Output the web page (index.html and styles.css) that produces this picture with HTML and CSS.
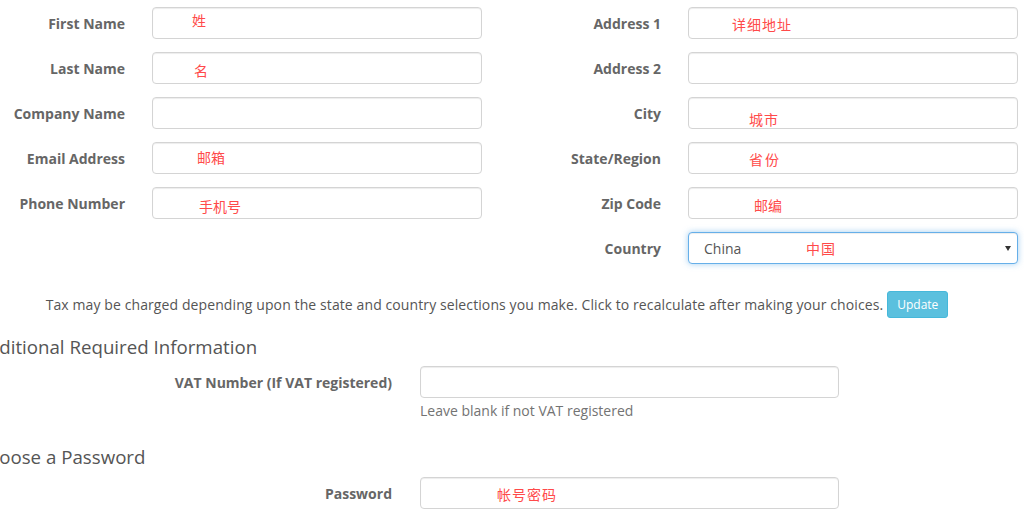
FILE: index.html
```html
<!DOCTYPE html>
<html>
<head>
    <meta charset="utf-8">
    <title>Register</title>
    <link rel="stylesheet" href="styles.css">
</head>
<body>
    <div class="page">

        <div class="columns">
            <div class="col col-left">
                <label>First Name</label>
                <div class="field"><input class="form-control" type="text"><span class="note n-first">姓</span></div>

                <label>Last Name</label>
                <div class="field"><input class="form-control" type="text"><span class="note n-last">名</span></div>

                <label>Company Name</label>
                <div class="field"><input class="form-control" type="text"></div>

                <label>Email Address</label>
                <div class="field"><input class="form-control" type="text"><span class="note n-email">邮箱</span></div>

                <label>Phone Number</label>
                <div class="field"><input class="form-control" type="text"><span class="note n-phone">手机号</span></div>
            </div>

            <div class="col col-right">
                <label>Address 1</label>
                <div class="field"><input class="form-control" type="text"><span class="note n-addr">详细地址</span></div>

                <label>Address 2</label>
                <div class="field"><input class="form-control" type="text"></div>

                <label>City</label>
                <div class="field"><input class="form-control" type="text"><span class="note n-city">城市</span></div>

                <label>State/Region</label>
                <div class="field"><input class="form-control" type="text"><span class="note n-state">省份</span></div>

                <label>Zip Code</label>
                <div class="field"><input class="form-control" type="text"><span class="note n-zip">邮编</span></div>

                <label>Country</label>
                <div class="field select-wrap">
                    <select class="form-control focused">
                        <option>China</option>
                    </select>
                    <span class="note n-country">中国</span>
                </div>
            </div>
        </div>

        <div class="tax">
            <span>Tax may be charged depending upon the state and country selections you make. Click to recalculate after making your choices.</span>
            <button class="btn-update">Update</button>
        </div>

        <h3 class="section-title">Additional Required Information</h3>
        <div class="wide-row">
            <label>VAT Number (If VAT registered)</label>
            <div class="field"><input class="form-control" type="text"></div>
            <div></div>
            <p class="help">Leave blank if not VAT registered</p>
        </div>

        <h3 class="section-title title-pass">Choose a Password</h3>
        <div class="wide-row">
            <label>Password</label>
            <div class="field"><input class="form-control" type="password"><span class="note n-pass">帐号密码</span></div>
        </div>

    </div>
</body>
</html>
```

FILE: styles.css
```css
body {
    margin: 0;
    font-family: "Open Sans", "Noto Sans", sans-serif;
    font-size: 14px;
    color: #555;
    background: #fff;
    overflow: hidden;
}
.page {
    margin-left: -24px;
    padding-top: 7px;
    width: 1070px;
}
.columns {
    display: flex;
    column-gap: 27px;
}
.col {
    display: grid;
    column-gap: 27px;
    row-gap: 13px;
    align-items: center;
    align-content: start;
}
.col-left {
    grid-template-columns: 149px 330px;
}
.col-right {
    grid-template-columns: 152px 330px;
}
label {
    text-align: right;
    font-weight: 700;
    color: #666;
}
.field {
    position: relative;
    height: 32px;
}
.form-control {
    box-sizing: border-box;
    width: 100%;
    height: 32px;
    margin: 0;
    padding: 5px 12px;
    font-family: inherit;
    font-size: 14px;
    color: #555;
    background: #fff;
    border: 1px solid #d4d4d4;
    border-radius: 4px;
    box-shadow: inset 0 1px 1px rgba(0, 0, 0, 0.075);
    outline: none;
}
select.form-control {
    -webkit-appearance: none;
    appearance: none;
    padding-left: 15px;
}
.focused {
    border-color: #66afe9;
    box-shadow: inset 0 1px 1px rgba(0, 0, 0, 0.075), 0 0 6px rgba(102, 175, 233, 0.6);
}
.select-wrap::after {
    content: "";
    position: absolute;
    right: 7px;
    top: 14px;
    border-left: 3px solid transparent;
    border-right: 3px solid transparent;
    border-top: 5px solid #333;
}
/* red annotations drawn over the fields */
.note {
    position: absolute;
    font-family: "Noto Sans CJK SC", sans-serif;
    font-size: 14px;
    line-height: 16px;
    color: #ff4a4a;
    pointer-events: none;
}
.n-first { left: 40px; top: 5px; }
.n-last { left: 42px; top: 10px; }
.n-email { left: 45px; top: 7px; }
.n-phone { left: 47px; top: 11px; }
.n-addr { left: 44px; top: 9px; letter-spacing: 1px; }
.n-city { left: 61px; top: 14px; letter-spacing: 1px; }
.n-state { left: 61px; top: 9px; letter-spacing: 2px; }
.n-zip { left: 66px; top: 10px; }
.n-country { left: 118px; top: 8px; letter-spacing: 1px; }
.n-pass { left: 77px; top: 9px; letter-spacing: 1px; }

.tax {
    display: flex;
    justify-content: center;
    align-items: center;
    column-gap: 4px;
    margin-top: 27px;
    width: 1042px;
    letter-spacing: 0.1px;
}
.btn-update {
    font-family: inherit;
    font-size: 12px;
    letter-spacing: 0;
    color: #fff;
    background: #5bc0de;
    border: 1px solid #46b8da;
    border-radius: 3px;
    padding: 0 9px;
    height: 27px;
}
.section-title {
    margin: 17px 0 0;
    font-size: 18.7px;
    line-height: 24px;
    font-weight: 400;
    color: #555;
}
.title-pass {
    margin-top: 24px;
}
.wide-row {
    display: grid;
    grid-template-columns: 416px 419px;
    column-gap: 28px;
    align-items: center;
    margin-top: 7px;
}
.title-pass + .wide-row {
    margin-top: 8px;
}
.help {
    margin: 3px 0 0;
    line-height: 20px;
    color: #737373;
}
```
